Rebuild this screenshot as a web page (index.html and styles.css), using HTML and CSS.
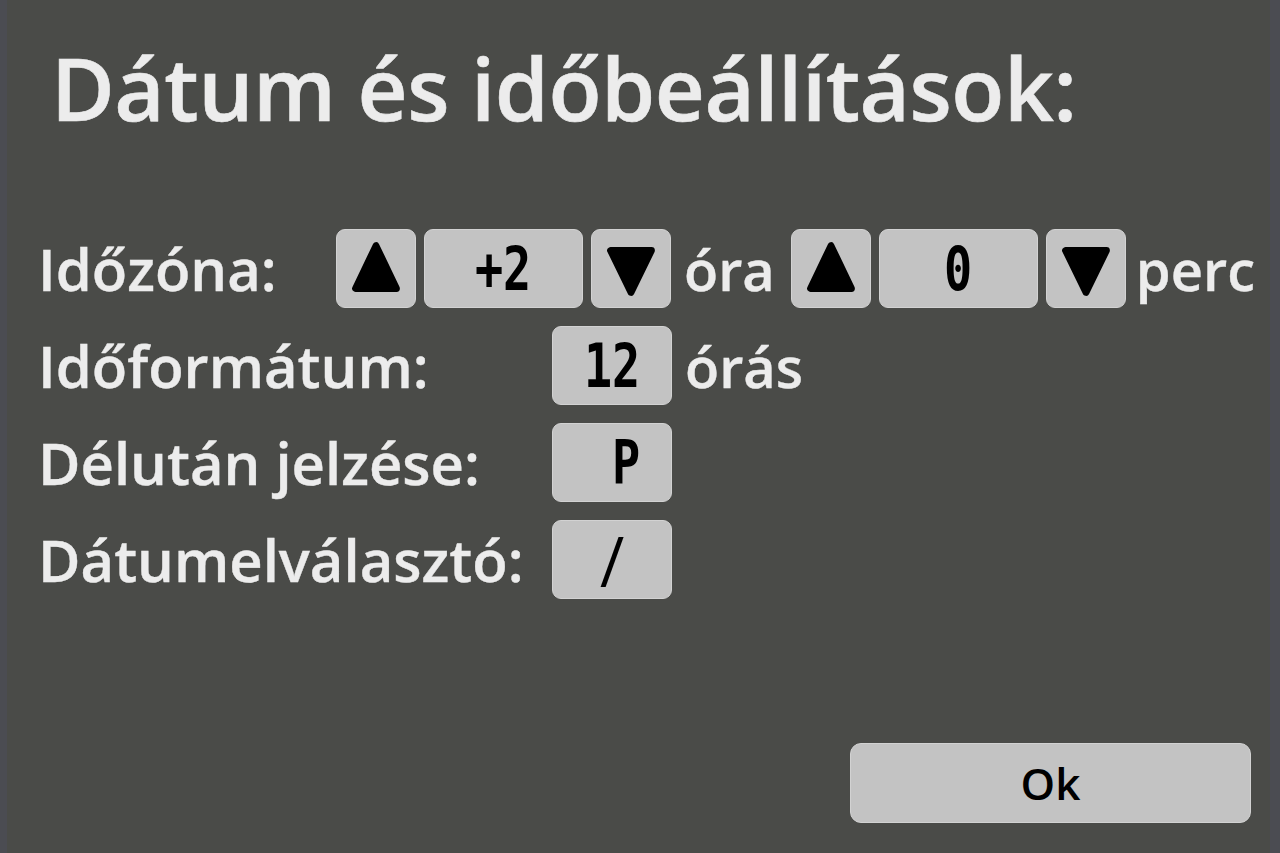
FILE: index.html
```html
<!DOCTYPE html>
<html lang="hu">
<head>
<meta charset="utf-8">
<title>Dátum és időbeállítások</title>
<link rel="stylesheet" href="styles.css">
</head>
<body>
<div class="screen">
  <h1 class="title">Dátum és időbeállítások:</h1>
  <div class="rows">
    <div class="row">
      <div class="label label-short">Időzóna:</div>
      <div class="key arrow">
        <svg viewBox="0 0 80 78" width="80" height="78"><polygon points="19,59 61,59 40,15" fill="#000" stroke="#000" stroke-width="7" stroke-linejoin="round"/></svg>
      </div>
      <div class="key field wide"><span class="val">+2</span></div>
      <div class="key arrow">
        <svg viewBox="0 0 80 78" width="80" height="78"><polygon points="19,20 61,20 40,63" fill="#000" stroke="#000" stroke-width="7" stroke-linejoin="round"/></svg>
      </div>
      <div class="unit">óra</div>
      <div class="key arrow">
        <svg viewBox="0 0 80 78" width="80" height="78"><polygon points="19,59 61,59 40,15" fill="#000" stroke="#000" stroke-width="7" stroke-linejoin="round"/></svg>
      </div>
      <div class="key field wide"><span class="val">0</span></div>
      <div class="key arrow">
        <svg viewBox="0 0 80 78" width="80" height="78"><polygon points="19,20 61,20 40,63" fill="#000" stroke="#000" stroke-width="7" stroke-linejoin="round"/></svg>
      </div>
      <div class="unit unit-last">perc</div>
    </div>
    <div class="row">
      <div class="label">Időformátum:</div>
      <div class="key field narrow"><span class="val">12</span></div>
      <div class="unit">órás</div>
    </div>
    <div class="row">
      <div class="label">Délután jelzése:</div>
      <div class="key field narrow"><span class="val pre"> P</span></div>
    </div>
    <div class="row">
      <div class="label">Dátumelválasztó:</div>
      <div class="key field narrow"><span class="val">/</span></div>
    </div>
  </div>
  <div class="footer">
    <button class="ok" type="button">Ok</button>
  </div>
</div>
</body>
</html>
```
FILE: styles.css
```css
html, body {
  margin: 0;
  padding: 0;
  background: #4a4b48;
}

.screen {
  box-sizing: border-box;
  width: 1280px;
  height: 853px;
  background: #4a4b48;
  border-left: 7px solid #4b4c52;
  border-right: 10px solid #4b4c52;
  padding: 0 19px 30px 31px;
  display: flex;
  flex-direction: column;
  font-family: "Open Sans", "Noto Sans", sans-serif;
  font-weight: 600;
  color: #ececec;
}

.title {
  margin: 44px 0 0 13px;
  font-size: 87px;
  line-height: 1;
  font-weight: 600;
  letter-spacing: -0.5px;
  color: #ececec;
  -webkit-text-stroke: 0.6px #ececec;
}

.rows {
  margin-top: 98px;
  display: flex;
  flex-direction: column;
  gap: 18px;
}

.row {
  display: flex;
  align-items: center;
  height: 79px;
  gap: 8px;
}

.row > * {
  flex: none;
}

.label {
  width: 506px;
  font-size: 58px;
  line-height: 1;
  white-space: nowrap;
  -webkit-text-stroke: 0.4px #ececec;
}

.label.label-short {
  width: 290px;
}

.key {
  box-sizing: border-box;
  height: 79px;
  background: #c3c3c3;
  border: 1px solid #d2d2d2;
  border-radius: 9px;
  display: flex;
  align-items: center;
  justify-content: center;
}

.arrow {
  width: 80px;
}

.arrow svg {
  display: block;
}

.field.wide {
  width: 159px;
}

.field.narrow {
  width: 120px;
}

.val {
  display: inline-block;
  font-family: "DejaVu Sans Mono", "Liberation Mono", monospace;
  font-weight: bold;
  font-size: 60px;
  line-height: 1;
  color: #000;
  transform: scaleX(0.78);
}

.val.pre {
  white-space: pre;
}

.unit {
  font-size: 56px;
  line-height: 1;
  padding: 0 8px 0 5px;
  white-space: nowrap;
  -webkit-text-stroke: 0.4px #ececec;
}

.unit-last {
  padding: 0 0 0 2px;
}

.footer {
  margin-top: auto;
  display: flex;
  justify-content: flex-end;
}

.ok {
  box-sizing: border-box;
  width: 401px;
  height: 80px;
  background: #c3c3c3;
  border: 1px solid #d2d2d2;
  border-radius: 11px;
  font-family: "Open Sans", "Noto Sans", sans-serif;
  font-weight: 600;
  font-size: 44px;
  line-height: 1;
  color: #000;
  padding: 0;
}
```
